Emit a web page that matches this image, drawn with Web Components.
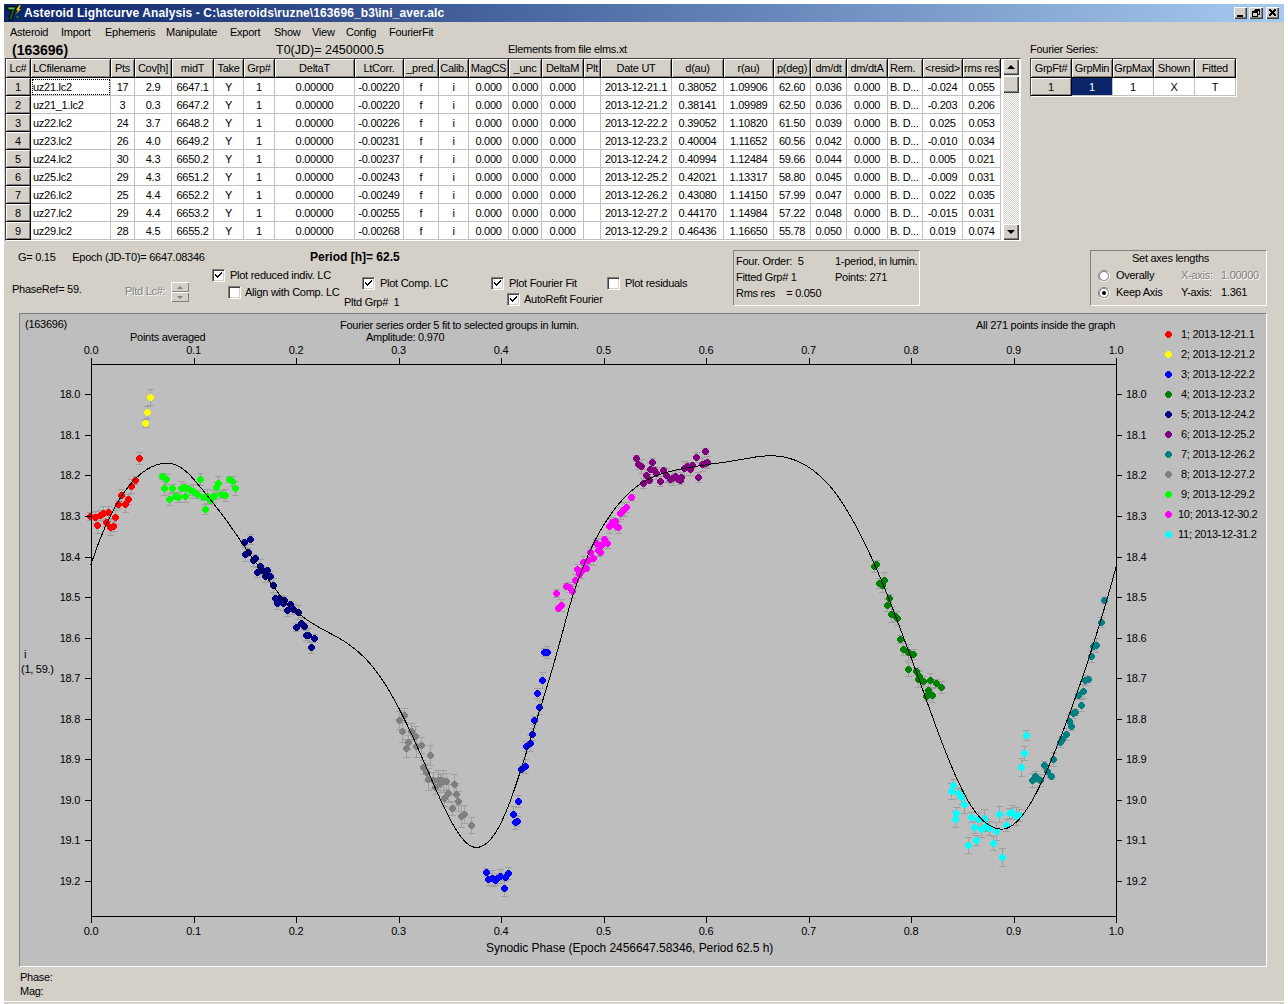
<!DOCTYPE html>
<html lang="en">
<head>
<meta charset="utf-8">
<title>Asteroid Lightcurve Analysis</title>
<style>
html,body{margin:0;padding:0;background:#fff;overflow:hidden}
body{font:11px/13px "Liberation Sans",Arial,sans-serif;letter-spacing:-.27px;color:#000}
</style>
</head>
<body>
<asteroid-app></asteroid-app>
<script>
function def(name, css, html, extra){
  customElements.define(name, class extends HTMLElement{
    constructor(){super();const r=this.attachShadow({mode:'open'});
      r.innerHTML='<style>'+css+'</style>'+(typeof html==='function'?html(this):html);}
    connectedCallback(){ if(extra) extra(this); }
  });
}

/* ---------- Small widgets ---------- */
def('win-button',
 `:host{display:block;width:var(--w,13px);height:12px;background:#d4d0c8;box-shadow:inset 1px 1px #fff,inset -1px -1px #404040,inset -2px -2px #808080}
  svg{display:block}`,
 `<svg width="14" height="12" viewBox="0 0 14 12" shape-rendering="crispEdges" fill="none" stroke="#000"></svg>`,
 el=>{const k=el.getAttribute('kind');const s=el.shadowRoot.querySelector('svg');
  s.innerHTML = k==='min' ? '<path d="M3 9.5h6M3 8.5h6"/>'
   : k==='restore' ? '<path d="M5.5 2.5h5v5h-2M5.5 3.5h5M5.5 2.5v2M3.5 4.5h5v5h-5zM3.5 5.5h5"/>'
   : '<path d="M3 2.5l6 6M4 2.5l6 6M9 2.5l-6 6M10 2.5l-6 6"/>';});

def('app-icon',`:host{display:block;width:16px;height:16px}svg{display:block}`,
 `<svg width="16" height="16" viewBox="0 0 16 16">
   <path d="M1 1.5h9.5L9 5 6 15H2.5L5.5 5.5H2L1 3z" fill="#0c5c1c" stroke="#000" stroke-width="1"/>
   <path d="M2.5 2.8h6L8 4H3z" fill="#5fc060"/>
   <path d="M13.5 0 10 5h2l-2.5 4.5L15 4h-2l2-4z" fill="#ffe800" stroke="#5a4a00" stroke-width=".4"/>
   <rect x="10.5" y="11" width="2" height="2" fill="#1f7f2f"/><rect x="1" y="13" width="1.5" height="1.5" fill="#444"/>
  </svg>`);

def('win-titlebar',
 `:host{display:flex;align-items:center;height:18px;padding:0 5px 0 2px;box-sizing:border-box;background:linear-gradient(90deg,#0a246a,#a6caf0);color:#fff;font-weight:700;font-size:12px;letter-spacing:.1px}
  .t{margin-left:2px;flex:1;white-space:nowrap}.b{display:flex}`,
 `<app-icon></app-icon><span class="t"><slot></slot></span><div class="b"><win-button kind="min"></win-button><win-button kind="restore" style="--w:14px;margin:0 3px 0 2px"></win-button><win-button kind="close"></win-button></div>`);

def('win-menubar',
 `:host{display:grid;grid-template-columns:51px 44px 61px 64px 44px 38px 34px 43px auto;height:19px;box-sizing:border-box;padding:1px 0 0 6px;align-items:center;white-space:nowrap}`,
 `<slot></slot>`);

def('win-check',
 `:host{display:flex;align-items:center;height:13px;white-space:nowrap;margin-left:var(--indent,0)}
  .box{width:13px;height:13px;flex:none;box-sizing:border-box;background:#fff;border:1px solid;border-color:#808080 #fff #fff #808080;box-shadow:inset 1px 1px #404040,inset -1px -1px #d4d0c8;margin-right:var(--gap,5px)}
  svg{display:block;margin:1px}`,
 el=>`<span class="box">${el.hasAttribute('checked')?'<svg width="9" height="9" viewBox="0 0 9 9" shape-rendering="crispEdges"><path d="M1 3h1v1h1v1h1V4h1V3h1V2h1V1h1v2H7v1H6v1H5v1H4v1H3V6H2V5H1z" fill="#000"/></svg>':''}</span><slot></slot>`);

def('win-radio',
 `:host{display:flex;align-items:center;height:13px;white-space:nowrap}
  svg{flex:none;margin-right:6px;display:block}`,
 el=>`<svg width="12" height="12" viewBox="0 0 12 12"><circle cx="6" cy="6" r="5.5" fill="#fff" stroke="#808080"/><path d="M10 2a5.5 5.5 0 0 1 0 8 5.5 5.5 0 0 1-8 0" fill="none" stroke="#fff"/><circle cx="6" cy="6" r="4.5" fill="none" stroke="#404040" stroke-width=".6"/>${el.hasAttribute('checked')?'<circle cx="6" cy="6" r="2" fill="#000"/>':''}</svg><slot></slot>`);

def('win-spin',
 `:host{display:flex;flex-direction:column;gap:0;width:18px;height:20px}
  i{display:block;flex:1;background:#d4d0c8;box-shadow:inset 1px 1px #fff,inset -1px -1px #808080;position:relative}
  i::after{content:"";position:absolute;left:6px;top:4px;border:3px solid transparent;border-top:0;border-bottom:3px solid #808080}
  i+i::after{border-bottom:0;border-top:3px solid #808080}`,
 `<i></i><i></i>`);

def('group-box',
 `:host{display:block;box-sizing:border-box;border:1px solid;border-color:#808080 #fff #fff #808080;height:56px}`,
 `<slot></slot>`);

/* ---------- Data grids ---------- */
const COLS=[25,80,24,37,42,30,31,80,49,35,30,40,33,42,17,71,52,50,37,36,41,35,40,38];
const HEAD=['Lc#','LCfilename','Pts','Cov[h]','midT','Take','Grp#','DeltaT','LtCorr.','_pred.','Calib.','MagCS','_unc','DeltaM','Plt','Date UT','d(au)','r(au)','p(deg)','dm/dt','dm/dtA','Rem.','<resid>','rms res'];
const ROWS=[
['uz21.lc2',17,'2.9','6647.1','-0.00220','2013-12-21.1','0.38052','1.09906','62.60','0.036','-0.024','0.055'],
['uz21_1.lc2',3,'0.3','6647.2','-0.00220','2013-12-21.2','0.38141','1.09989','62.50','0.036','-0.203','0.206'],
['uz22.lc2',24,'3.7','6648.2','-0.00226','2013-12-22.2','0.39052','1.10820','61.50','0.039','0.025','0.053'],
['uz23.lc2',26,'4.0','6649.2','-0.00231','2013-12-23.2','0.40004','1.11652','60.56','0.042','-0.010','0.034'],
['uz24.lc2',30,'4.3','6650.2','-0.00237','2013-12-24.2','0.40994','1.12484','59.66','0.044','0.005','0.021'],
['uz25.lc2',29,'4.3','6651.2','-0.00243','2013-12-25.2','0.42021','1.13317','58.80','0.045','-0.009','0.031'],
['uz26.lc2',25,'4.4','6652.2','-0.00249','2013-12-26.2','0.43080','1.14150','57.99','0.047','0.022','0.035'],
['uz27.lc2',29,'4.4','6653.2','-0.00255','2013-12-27.2','0.44170','1.14984','57.22','0.048','-0.015','0.031'],
['uz29.lc2',28,'4.5','6655.2','-0.00268','2013-12-29.2','0.46436','1.16650','55.78','0.050','0.019','0.074']];
const esc=s=>String(s).replace(/&/g,'&amp;').replace(/</g,'&lt;');
const GRIDCSS=`
  .c{box-sizing:border-box;border-right:1px solid #c0c0c0;border-bottom:1px solid #c0c0c0;text-align:center;line-height:18px;white-space:nowrap;overflow:hidden;background:#fff}
  .h{background:#d4d0c8;border-right:1px solid #000;border-bottom:1px solid #000;box-shadow:inset 1px 1px #fff,inset -1px -1px #808080;line-height:18px}
  .l{text-align:left;padding-left:2px}`;

def('lc-grid',
 `:host{display:flex;box-sizing:border-box;width:1016px;height:183px;margin-left:1px;border:1px solid;border-color:#404040 #fff #fff #404040;background:#fff}
  .g{display:grid;grid-template-columns:${COLS.map(w=>w+'px').join(' ')};grid-template-rows:19px repeat(9,18px);width:995px;flex:none}
  .f{outline:1px dotted #000;outline-offset:-2px}
  win-scroll{margin-left:2px}`+GRIDCSS,
 ()=>{
  let s='<div class="g">';
  HEAD.forEach((h,i)=>{s+=`<div class="c h${i==1||i==21?' l':''}">${esc(h)}</div>`;});
  ROWS.forEach((r,i)=>{
    const cells=[r[0],r[1],r[2],r[3],'Y','1','0.00000',r[4],'f','i','0.000','0.000','0.000','',r[5],r[6],r[7],r[8],r[9],'0.000','B. D...',r[10],r[11]];
    s+=`<div class="c h">${i+1}</div>`;
    cells.forEach((v,j)=>{s+=`<div class="c${j==0||j==20?' l':''}${i==0&&j==0?' f':''}">${esc(v)}</div>`;});
  });
  return s+'</div><win-scroll></win-scroll>';
 });

def('win-scroll',
 `:host{display:flex;flex-direction:column;width:16px;flex:none;height:181px;background:repeating-conic-gradient(#d4d0c8 0 25%,#fff 0 50%) 0 0/2px 2px}
  b{display:block;width:16px;background:#d4d0c8;box-shadow:inset 1px 1px #fff,inset -1px -1px #404040,inset -2px -2px #808080;position:relative;flex:none}
  .a{height:16px}.t{height:17px;margin-top:1px}.s{flex:1}
  .a::after{content:"";position:absolute;left:4px;top:6px;border:4px solid transparent;border-top:0;border-bottom:4px solid #000}
  .d::after{border-bottom:0;border-top:4px solid #000}`,
 `<b class="a"></b><b class="t"></b><div class="s"></div><b class="a d"></b>`);

def('fourier-grid',
 `:host{display:grid;box-sizing:border-box;width:207px;height:39px;padding:0;border:1px solid;border-color:#404040 #fff #fff #404040;grid-template-columns:repeat(5,41px);grid-template-rows:19px 18px;background:#fff}`+GRIDCSS+`
  .c.x{background:#0a246a;color:#fff}`,
 ()=>{
  const h=['GrpFt#','GrpMin','GrpMax','Shown','Fitted'];
  return h.map(t=>`<div class="c h">${t}</div>`).join('')+`<div class="c h">1</div><div class="c x">1</div><div class="c">1</div><div class="c">X</div><div class="c">T</div>`;
 });

/* ---------- Plot ---------- */
const GROUPS=[
 {c:'#ff0000',o:[0,350],e:6,p:[[272,498],[285,502],[292,526],[300,495],[310,491],[319,517],[325,487],[332,532],[341,529],[346,502],[354,463],[363,436],[377,463],[386,448],[394,409],[406,391],[418,325]]},
 {c:'#ffff00',o:[0,350],e:6,p:[[436,220],[442,188],[451,142]]},
 {c:'#0000ff',o:[340,600],e:6,p:[[613,157],[622,157],[607,241],[592,281],[598,322],[583,361],[577,403],[570,431],[558,439],[555,498],[543,507],[535,604],[519,643],[533,663],[525,668],[438,817],[445,838],[456,836],[467,842],[481,828],[497,832],[505,820],[492,866],[473,836]]},
 {c:'#008000',o:[850,550],e:6,p:[[80,42],[72,50],[103,91],[88,100],[97,105],[118,145],[112,166],[125,192],[137,198],[143,205],[152,267],[160,298],[175,307],[190,313],[175,358],[199,364],[209,380],[204,388],[219,394],[241,391],[260,400],[275,411],[235,422],[232,436],[247,436],[228,440]]},
 {c:'#000080',o:[0,350],e:5,p:[[733,577],[752,568],[737,613],[746,606],[760,631],[767,625],[772,667],[782,650],[788,660],[795,680],[803,660],[812,680],[821,705],[826,745],[832,760],[838,745],[845,750],[851,760],[853,750],[862,780],[870,763],[880,778],[895,787],[889,832],[903,820],[913,829],[919,855],[926,855],[942,865],[934,892]]},
 {c:'#800080',o:[530,430],e:5,p:[[319,85],[326,103],[335,110],[367,98],[349,135],[358,150],[340,160],[362,118],[372,120],[380,130],[400,120],[391,155],[410,135],[420,148],[435,138],[445,148],[455,142],[463,115],[473,110],[482,118],[488,105],[499,82],[516,103],[525,100],[533,97],[526,64],[505,142],[428,146],[452,152]]},
 {c:'#008080',o:[850,550],e:5,p:[[763,151],[754,217],[740,286],[730,288],[724,319],[715,388],[705,391],[700,424],[685,436],[695,466],[676,487],[669,490],[657,513],[664,530],[649,553],[638,568],[631,577],[610,628],[584,646],[593,665],[604,680],[555,680],[546,691],[562,685],[570,691]]},
 {c:'#808080',o:[340,600],e:9,p:[[193,346],[178,361],[187,394],[214,393],[225,408],[205,426],[199,445],[228,440],[244,436],[271,466],[250,503],[259,517],[265,538],[280,540],[294,541],[305,540],[301,551],[309,544],[319,545],[343,553],[285,563],[324,580],[348,582],[313,595],[355,604],[337,625],[372,642],[364,650],[394,676]]},
 {c:'#00ff00',o:[0,350],e:5,p:[[487,380],[500,388],[493,415],[517,415],[508,448],[525,438],[536,442],[545,415],[552,411],[556,438],[563,415],[572,420],[580,425],[592,433],[601,388],[610,442],[616,478],[622,438],[631,450],[640,440],[643,438],[649,413],[656,400],[664,433],[676,436],[688,388],[697,394],[706,415]]},
 {c:'#ff00ff',o:[530,430],e:5,p:[[303,202],[290,233],[283,238],[278,243],[272,250],[255,275],[247,278],[238,288],[258,290],[265,293],[222,328],[231,340],[215,345],[198,340],[204,362],[212,367],[181,368],[189,385],[176,392],[159,397],[168,415],[141,417],[155,423],[147,433],[136,452],[108,470],[118,473],[127,483],[80,490],[95,525],[84,535]]},
 {c:'#00ffff',o:[850,550],e:7,p:[[529,556],[522,610],[514,652],[310,706],[304,724],[326,729],[334,741],[343,763],[319,790],[317,808],[363,802],[384,809],[403,805],[374,832],[394,839],[406,830],[418,834],[438,845],[468,826],[448,793],[478,790],[487,788],[499,799],[507,796],[355,886],[379,871],[430,880],[457,922],[408,826]]}
];
const LEG=['1; 2013-12-21.1','2; 2013-12-21.2','3; 2013-12-22.2','4; 2013-12-23.2','5; 2013-12-24.2','6; 2013-12-25.2','7; 2013-12-26.2','8; 2013-12-27.2','9; 2013-12-29.2','10; 2013-12-30.2','11; 2013-12-31.2'];
const RAW=[[90.7,565],[100,536.7],[110,516.7],[120,496.7],[133.3,479.3],[146.7,467.7],[160,463.3],[166.7,462.7],[176.7,464],[186.7,470],[200,486.7],[213.3,503.3],[226.7,520],[240,540],[253.3,560],[266.7,576.7],[280,596.7],[293.3,610],[306.7,620],[320,628.3],[333.3,635],[340,638.3],[353.3,646.7],[370,661.7],[383.3,680],[396.7,703.3],[410,730],[423.3,760],[436.7,791.7],[450,821.7],[463.3,841.7],[471.7,847.7],[480,848.3],[490,842.7],[500,826.7],[510,803.3],[520,773.3],[530,740],[540,710],[553.3,666.7],[563.3,630],[570,603],[580,573],[590,550],[600,530],[610,515],[620,501.7],[630,491.7],[643,480.7],[656.7,475],[670,471],[690,467],[710,464],[730,461.7],[750,458],[760,456],[773,455.3],[787,456.7],[800,461.7],[813,469],[827,481.7],[840,498],[853,520],[867,546.7],[877,570],[890,600],[903,637],[917,673],[930,710],[943,747],[957,780],[970,807],[983,823],[997,830],[1007,830],[1017,823],[1030,807],[1043,780],[1057,747],[1070,713],[1083,677],[1097,633],[1110,590],[1116,567]];
/* one light pass to remove reading noise from the hand-picked samples */
const CURVE=RAW.map((p,i)=>{
  if(i===0||i===RAW.length-1) return p;
  const a=RAW[i-1],b=RAW[i+1];
  return [+(.25*a[0]+.5*p[0]+.25*b[0]).toFixed(1),+(.25*a[1]+.5*p[1]+.25*b[1]).toFixed(1)];
});
function curvePath(){
  let d='M'+CURVE[0].join(' ');
  for(let i=0;i<CURVE.length-1;i++){
    const p0=CURVE[Math.max(i-1,0)],p1=CURVE[i],p2=CURVE[i+1],p3=CURVE[Math.min(i+2,CURVE.length-1)];
    d+=` C${(p1[0]+(p2[0]-p0[0])/6).toFixed(1)} ${(p1[1]+(p2[1]-p0[1])/6).toFixed(1)} ${(p2[0]-(p3[0]-p1[0])/6).toFixed(1)} ${(p2[1]-(p3[1]-p1[1])/6).toFixed(1)} ${p2[0]} ${p2[1]}`;
  }
  return d;
}
/* a 7-pixel disc, as the old GDI Ellipse call plots it */
const disc=(x,y)=>{const cx=Math.floor(x),cy=Math.floor(y);
  return `M${cx-1} ${cy-3}h3v1h1v1h1v3h-1v1h-1v1h-3v-1h-1v-1h-1v-3h1v-1h1z`;};
function plotSVG(){
  const X=v=>91+v*1025, Y=k=>394.3+k*40.55;
  let s='';
  GROUPS.forEach(g=>{
    let bars='',dots='';
    g.p.forEach((p,i)=>{
      const x=g.o[0]+p[0]/3,y=g.o[1]+p[1]/3;
      const e=g.e+((i*7)%5)-2;
      const xr=Math.floor(x)+.5,y0=Math.floor(y-e)+.5,y1=Math.floor(y+e)+.5;
      bars+=`M${xr} ${y0}V${y1}M${xr-3.5} ${y0}h7M${xr-3.5} ${y1}h7`;
      dots+=disc(x,y);
    });
    s+=`<path d="${bars}" fill="none" stroke="#a0a0a0" shape-rendering="crispEdges"/><path d="${dots}" fill="${g.c}" shape-rendering="crispEdges"/>`;
  });
  s+=`<path d="${curvePath()}" fill="none" stroke="#000" stroke-width="1" shape-rendering="crispEdges"/>`;
  let t='M91.5 364.5H1116.5V916.5H91.5Z';
  for(let i=0;i<=10;i++){const x=Math.round(X(i/10))+.5;t+=`M${x} 358V364M${x} 916V923`;}
  for(let k=0;k<=12;k++){const y=Math.round(Y(k))+.5;t+=`M85 ${y}H91M1116 ${y}H1122`;}
  s+=`<path d="${t}" fill="none" stroke="#000" shape-rendering="crispEdges"/>`;
  for(let i=0;i<=10;i++){const x=X(i/10),l=(i/10).toFixed(1);
    s+=`<text x="${x}" y="354" text-anchor="middle">${l}</text><text x="${x}" y="935" text-anchor="middle">${l}</text>`;}
  for(let k=0;k<=12;k++){const y=Y(k)+4,l=(18+k/10).toFixed(1);
    s+=`<text x="80" y="${y}" text-anchor="end">${l}</text><text x="1126" y="${y}">${l}</text>`;}
  [[25,328,'(163696)'],[130,341,'Points averaged'],[340,329,'Fourier series order 5 fit to selected groups in lumin.'],[366,341,'Amplitude: 0.970'],[976,329,'All 271 points inside the graph'],[24,658,'i'],[21,673,'(1, 59.)']]
   .forEach(a=>{s+=`<text x="${a[0]}" y="${a[1]}">${esc(a[2])}</text>`;});
  s+=`<text x="486" y="952" style="font-size:12px;letter-spacing:-.06px">Synodic Phase (Epoch 2456647.58346, Period 62.5 h)</text>`;
  LEG.forEach((l,i)=>{const y=334+i*20;
    s+=`<path d="${disc(1168,y)}" fill="${GROUPS[i].c}" shape-rendering="crispEdges"/><text x="${i<9?1181:1178}" y="${y+4}">${l}</text>`;});
  return s;
}
def('phase-plot',
 `:host{display:block;box-sizing:border-box;width:1248px;height:654px;margin-left:15px;border:1px solid;border-color:#808080 #fff #fff #808080;background:#bebebe}
  svg{display:block;font:inherit;letter-spacing:inherit}`,
 ()=>`<svg width="1246" height="652" viewBox="20 314 1246 652">${plotSVG()}</svg>`);

/* ---------- App ---------- */
def('asteroid-app',
 `:host{display:flex;flex-direction:column;width:1280px;height:1000px;margin:4px 0 0 4px;background:#d4d0c8}
  .top{display:flex;height:200px;flex:none}
  .left{width:1017px;flex:none}
  .strip{display:grid;grid-template-columns:264px 232px auto;height:17px;padding-left:8px;align-items:center;white-space:nowrap}
  .name{font-weight:700;font-size:14px;letter-spacing:0;padding-top:1px}
  .t0{font-size:12.5px;letter-spacing:0;padding-top:1px}
  .right{margin-left:9px}.right .lab{height:17px;line-height:17px}
  .controls{display:flex;height:72px;flex:none}
  .mid{width:729px;flex:none}
  .line{height:27px;box-sizing:border-box;padding:10px 0 0 14px;display:grid;grid-template-columns:292px auto;white-space:nowrap}
  .per{font-weight:700;font-size:12px;letter-spacing:0}
  .rowb{display:grid;grid-template-columns:113px 87px 135px 144px 116px auto;padding-left:8px;height:45px}
  .pr{padding-top:15px}
  .lc{display:flex;gap:6px;padding-top:14px;align-items:flex-start;color:#808080;text-shadow:1px 1px #fff}
  .lc span{padding-top:3px}
  .stack{display:flex;flex-direction:column}
  .info{width:187px;margin-top:9px;display:grid;grid-template-columns:99px auto;grid-auto-rows:16px;align-items:center;padding:2px 0 0 2px;box-sizing:border-box;white-space:pre}
  .axes{width:177px;margin:9px 17px 0 auto}
  .axg{display:grid;grid-template-columns:83px 40px auto;grid-auto-rows:17px;align-items:center;padding-left:7px}
  .axt{text-align:center;height:15px;padding:1px 16px 0 0}
  .dis{color:#808080;text-shadow:1px 1px #fff}
  .status{height:34px;padding:3px 0 0 16px;box-sizing:border-box;flex:none;line-height:14px}
  .foot{flex:1;border-top:1px solid #fff}`,
 `<win-titlebar>Asteroid Lightcurve Analysis - C:\\asteroids\\ruzne\\163696_b3\\ini_aver.alc</win-titlebar>
  <win-menubar><span>Asteroid</span><span>Import</span><span>Ephemeris</span><span>Manipulate</span><span>Export</span><span>Show</span><span>View</span><span>Config</span><span>FourierFit</span></win-menubar>
  <div class="top">
    <div class="left">
      <div class="strip"><span class="name">(163696)</span><span class="t0">T0(JD)= 2450000.5</span><span>Elements from file elms.xt</span></div>
      <lc-grid></lc-grid>
    </div>
    <div class="right"><div class="lab">Fourier Series:</div><fourier-grid></fourier-grid></div>
  </div>
  <div class="controls">
    <div class="mid">
      <div class="line"><span>G= 0.15&nbsp;&nbsp;&nbsp;&nbsp;&nbsp; Epoch (JD-T0)= 6647.08346</span><span class="per">Period [h]= 62.5</span></div>
      <div class="rowb">
        <div class="pr">PhaseRef= 59.</div>
        <div class="lc"><span>Pltd Lc#:</span><win-spin></win-spin></div>
        <div class="stack" style="padding-top:1px;gap:4px">
          <win-check checked>Plot reduced indiv. LC</win-check>
          <win-check style="--indent:16px;--gap:4px">Align with Comp. LC</win-check>
        </div>
        <div class="stack" style="padding-top:9px;gap:6px">
          <win-check checked style="--indent:15px">Plot Comp. LC</win-check>
          <div style="margin-left:-3px">Pltd Grp#&nbsp; 1</div>
        </div>
        <div class="stack" style="padding-top:9px;gap:3px">
          <win-check checked>Plot Fourier Fit</win-check>
          <win-check checked style="--indent:16px;--gap:4px">AutoRefit Fourier</win-check>
        </div>
        <div class="stack" style="padding-top:9px"><win-check>Plot residuals</win-check></div>
      </div>
    </div>
    <group-box class="info"><span>Four. Order:  5</span><span>1-period, in lumin.</span><span>Fitted Grp# 1</span><span>Points: 271</span><span>Rms res    = 0.050</span></group-box>
    <group-box class="axes">
      <div class="axt">Set axes lengths</div>
      <div class="axg">
        <win-radio>Overally</win-radio><span class="dis">X-axis:</span><span class="dis">1.00000</span>
        <win-radio checked>Keep Axis</win-radio><span>Y-axis:</span><span>1.361</span>
      </div>
    </group-box>
  </div>
  <phase-plot></phase-plot>
  <div class="status"><div>Phase:</div><div>Mag:</div></div>
  <div class="foot"></div>`);
</script>
</body>
</html>
